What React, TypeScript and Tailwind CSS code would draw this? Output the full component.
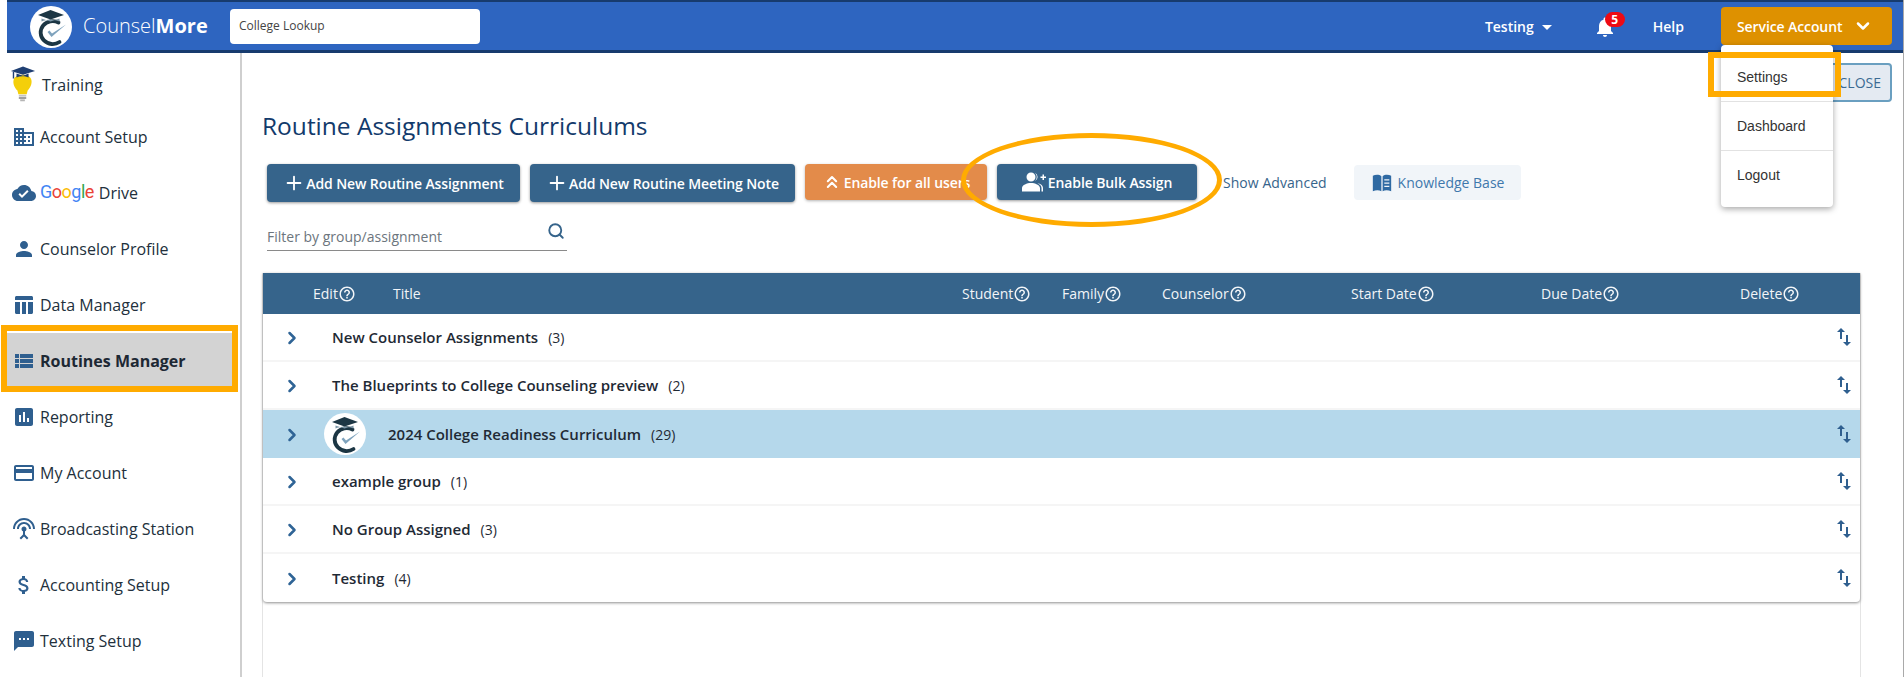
import React from 'react';
import { ChevronDown, ChevronRight, ChevronsUp, Plus, Search } from 'lucide-react';

const paths: Record<string, string> = {
  business: 'M12 7V3H2v18h20V7H12zM6 19H4v-2h2v2zm0-4H4v-2h2v2zm0-4H4V9h2v2zm0-4H4V5h2v2zm4 12H8v-2h2v2zm0-4H8v-2h2v2zm0-4H8V9h2v2zm0-4H8V5h2v2zm10 12h-8v-2h2v-2h-2v-2h2v-2h-2V9h8v10zm-2-8h-2v2h2v-2zm0 4h-2v2h2v-2z',
  cloud: 'M19.35 10.04C18.67 6.59 15.64 4 12 4 9.11 4 6.6 5.64 5.35 8.04 2.34 8.36 0 10.91 0 14c0 3.31 2.69 6 6 6h13c2.76 0 5-2.24 5-5 0-2.64-2.05-4.78-4.65-4.96zM10 17l-3.5-3.5 1.41-1.41L10 14.17 15.18 9l1.41 1.41L10 17z',
  person: 'M12 12c2.21 0 4-1.79 4-4s-1.79-4-4-4-4 1.79-4 4 1.79 4 4 4zm0 2c-2.67 0-8 1.34-8 4v2h16v-2c0-2.66-5.33-4-8-4z',
  table: 'M3 4.5c0-.8.7-1.5 1.5-1.5h15c.8 0 1.5.7 1.5 1.5V7H3zM3 9h5v12H4.5C3.700 21 3 20.300 3 19.500zM10 9h4v12h-4zM16 9h5v10.500c0 .8-.7 1.500-1.500 1.500H16z',
  list: 'M3 14h4v-4H3v4zm0 5h4v-4H3v4zM3 9h4V5H3v4zm5 5h13v-4H8v4zm0 5h13v-4H8v4zM8 5v4h13V5H8z',
  chart: 'M19 3H5c-1.100 0-2 .9-2 2v14c0 1.100.9 2 2 2h14c1.100 0 2-.9 2-2V5c0-1.100-.9-2-2-2zM9 17H7v-7h2v7zm4 0h-2V7h2v10zm4 0h-2v-4h2v4z',
  card: 'M20 4H4c-1.110 0-1.990.89-1.990 2L2 18c0 1.110.89 2 2 2h16c1.110 0 2-.89 2-2V6c0-1.110-.89-2-2-2zm0 14H4v-6h16v6zm0-10H4V6h16v2z',
  antenna: 'M12 5c-3.870 0-7 3.130-7 7h2c0-2.760 2.240-5 5-5s5 2.240 5 5h2c0-3.870-3.130-7-7-7zm1 9.290c.88-.39 1.500-1.260 1.500-2.290 0-1.380-1.120-2.500-2.500-2.500S9.500 10.620 9.500 12c0 1.020.62 1.900 1.500 2.290v3.300L7.590 21 9 22.410l3-3 3 3L16.410 21 13 17.590v-3.300zM12 1C5.930 1 1 5.930 1 12h2c0-4.970 4.030-9 9-9s9 4.030 9 9h2c0-6.070-4.930-11-11-11z',
  dollar: 'M11.800 10.900c-2.270-.59-3-1.200-3-2.150 0-1.090 1.010-1.850 2.700-1.850 1.780 0 2.440.85 2.500 2.100h2.210c-.07-1.720-1.120-3.300-3.210-3.810V3h-3v2.160c-1.940.42-3.500 1.680-3.500 3.610 0 2.310 1.910 3.460 4.700 4.130 2.500.6 3 1.480 3 2.410 0 .69-.49 1.790-2.700 1.790-2.060 0-2.870-.92-2.980-2.100h-2.200c.12 2.190 1.760 3.420 3.680 3.830V21h3v-2.150c1.950-.37 3.500-1.500 3.500-3.550 0-2.840-2.430-3.810-4.700-4.400z',
  sms: 'M20 2H4c-1.100 0-1.990.9-1.990 2L2 22l4-4h14c1.100 0 2-.9 2-2V4c0-1.100-.9-2-2-2zM9 11H7V9h2v2zm4 0h-2V9h2v2zm4 0h-2V9h2v2z',
  swap: 'M16 17.010V10h-2v7.010h-3L15 21l4-3.990h-3zM9 3L5 6.990h3V14h2V6.990h3L9 3z',
  help: 'M11 18h2v-2h-2v2zm1-16C6.480 2 2 6.480 2 12s4.480 10 10 10 10-4.480 10-10S17.520 2 12 2zm0 18c-4.410 0-8-3.590-8-8s3.590-8 8-8 8 3.590 8 8-3.590 8-8 8zm0-14c-2.210 0-4 1.790-4 4h2c0-1.100.9-2 2-2s2 .9 2 2c0 2-3 1.750-3 5h2c0-2.250 3-2.500 3-5 0-2.210-1.790-4-4-4z',
  bell: 'M12 22c1.100 0 2-.9 2-2h-4c0 1.100.89 2 2 2zm6-6v-5c0-3.070-1.640-5.640-4.500-6.320V4c0-.83-.67-1.500-1.500-1.500s-1.500.67-1.500 1.500v.68C7.630 5.360 6 7.920 6 11v5l-2 2v1h16v-1l-2-2z',
  users: 'M9 11.500a4.500 4.500 0 1 0 0-9 4.500 4.500 0 0 0 0 9zM0 21.500v-3.500c0-3 5-5 9-5s9 2 9 5v3.500zM13 2.800a4.700 4.700 0 0 1 0 8.400 6.500 6.500 0 0 0 0-8.400zM15.500 13.300c3 .4 5.500 2.200 5.500 4.700v3.500h-1.500V18c0-2-1.500-3.600-4-4.700zM18.500 6.500h2v-2h1.500v2h2V8h-2v2h-1.500V8h-2z',
  book: 'M2 4c3-1.500 7-1.500 9.300.5V21c-2.300-1.500-6.300-1.500-9.300 0zM12.700 4.500C15 2.500 19 2.500 22 4v17c-3-1.500-7-1.500-9.300 0zM14.500 8v1.300h5.500V8zm0 3.500v1.300h5.500v-1.300zm0 3.500v1.300h5.500V15z',
};

const Icon = ({ name, className }: { name: string; className: string }) => (
  <svg viewBox="0 0 24 24" fill="currentColor" fillRule="evenodd" className={className}>
    <path d={paths[name]} />
  </svg>
);

const Logo = ({ className }: { className: string }) => (
  <svg viewBox="0 0 42 42" className={className}>
    <circle cx="21" cy="21" r="21" fill="#fff" />
    <path d="M29.500 36a12 11.500 0 1 1-1-19.500" fill="none" stroke="#1c3644" strokeWidth="3.800" strokeLinecap="round" />
    <path d="M8 9 20.500 4 34 9l-13.500 4.500z" fill="#1c3644" />
    <path d="M11.500 12.500v3c5-2.500 13-2.500 18 0v-3l-9 3z" fill="#7d97a8" />
    <path d="M17.500 26l4 5L36 18.500 22 27.500l-2.500-3z" fill="#7fa3bd" />
  </svg>
);

const TrainingIcon = () => (
  <svg viewBox="0 0 28 42" className="w-[26px] h-[40px] shrink-0">
    <path d="M8 27c-6-6-7-17 5.500-17S25 21 19 27l-1 4H9z" fill="#f4cf0a" />
    <rect x="9.500" y="31.500" width="8" height="2" fill="#c4c4c4" />
    <rect x="9.500" y="34" width="8" height="2" fill="#9a9a9a" />
    <rect x="11" y="36.500" width="5" height="2" fill="#b5b5b5" />
    <path d="M1 6 14 1l13 5-13 4z" fill="#1f3f73" />
    <path d="M7 8.500v4.500c4-2 9-2 13 0V8.500L14 11z" fill="#1f3f73" />
    <rect x="3" y="7" width="1.500" height="7" fill="#1f3f73" />
  </svg>
);

const menu = [
  { icon: 'business', label: 'Account Setup' },
  { icon: 'cloud', label: 'Drive', google: true },
  { icon: 'person', label: 'Counselor Profile' },
  { icon: 'table', label: 'Data Manager' },
  { icon: 'list', label: 'Routines Manager', active: true },
  { icon: 'chart', label: 'Reporting' },
  { icon: 'card', label: 'My Account' },
  { icon: 'antenna', label: 'Broadcasting Station' },
  { icon: 'dollar', label: 'Accounting Setup' },
  { icon: 'sms', label: 'Texting Setup' },
];

const columns = ['Student', 'Family', 'Counselor', 'Start Date', 'Due Date', 'Delete'];

const groups = [
  { title: 'New Counselor Assignments', count: 3 },
  { title: 'The Blueprints to College Counseling preview', count: 2 },
  { title: '2024 College Readiness Curriculum', count: 29, highlighted: true },
  { title: 'example group', count: 1 },
  { title: 'No Group Assigned', count: 3 },
  { title: 'Testing', count: 4 },
];

const HeadCell = ({ label }: { label: string }) => (
  <span className="flex items-center">
    {label}
    <Icon name="help" className="w-[18px] h-[18px]" />
  </span>
);

const Sidebar = () => (
  <aside className="w-[242px] shrink-0 border-r-2 border-[#cfcfcf] pt-2 text-[16px] text-[#22303c]">
    <div className="h-12 flex items-center pl-[10px] gap-[6px]">
      <TrainingIcon />
      <span>Training</span>
    </div>
    {menu.map((item) =>
      item.active ? (
        <div key={item.label} className="h-[54px] mb-[2px] pt-[2px] ml-[7px] w-[225px] pl-[5px] bg-[#d3d3d3] flex items-center gap-1 font-bold text-[#1d2833]">
          <Icon name={item.icon} className="w-6 h-6 shrink-0 text-[#2f5f8f]" />
          <span>{item.label}</span>
        </div>
      ) : (
        <div key={item.label} className="h-14 pl-3 flex items-center gap-1">
          <Icon name={item.icon} className="w-6 h-6 shrink-0 text-[#2f5f8f]" />
          {item.google && (
            <span className="text-[18px] tracking-[-0.5px] mr-[1px] -mt-1 font-['Roboto',sans-serif]">
              <span className="text-[#4285f4]">G</span>
              <span className="text-[#ea4335]">o</span>
              <span className="text-[#fbbc05]">o</span>
              <span className="text-[#4285f4]">g</span>
              <span className="text-[#34a853]">l</span>
              <span className="text-[#ea4335]">e</span>
            </span>
          )}
          <span>{item.label}</span>
        </div>
      )
    )}
  </aside>
);

const App: React.FC = () => {
  return (
    <div className="relative h-[677px] w-[1904px] overflow-hidden bg-white font-['Open_Sans',sans-serif] border-r border-[#a9a9a9]">
      <header className="ml-[7px] h-[53px] bg-[#2e65c0] border-t-2 border-b-[3px] border-[#173b6e] flex items-center text-white">
        <Logo className="w-[42px] h-[42px] ml-[23px] mt-[1px]" />
        <span className="ml-[11px] w-[123px] shrink-0 text-[20px] font-light whitespace-nowrap">Counsel<b className="font-bold">More</b></span>
        <div className="ml-6 w-[250px] h-[35px] bg-white rounded flex items-center pl-[9px] text-[12px] text-[#444]">College Lookup</div>
        <div className="ml-auto flex items-center text-[14px] font-semibold">
          <span className="flex items-center gap-2">
            Testing
            <span className="border-x-[5px] border-x-transparent border-t-[5px] border-t-white mt-[3px]" />
          </span>
          <span className="relative ml-[41px] mr-[36px] mt-[1px]">
            <Icon name="bell" className="w-[24px] h-[24px]" />
            <span className="absolute -top-[3px] left-[12px] w-5 h-[15px] rounded-full bg-[#ee0a14] text-[12px] leading-[15px] font-bold text-center">5</span>
          </span>
          <span>Help</span>
          <div className="ml-[37px] mr-[11px] w-[171px] h-[38px] rounded bg-[#de9100] flex items-center pl-4 text-[14px] font-semibold tracking-[-0.1px]">
            Service Account
            <ChevronDown className="w-5 h-5 ml-[11px]" strokeWidth={3} />
          </div>
        </div>
      </header>

      <div className="flex h-[624px]">
        <Sidebar />
        <main className="flex-1 pl-[20px] pr-[42px] flex flex-col min-w-0">
          <div className="flex justify-end h-[10px] relative">
            <button className="absolute top-[10px] -right-[31px] w-[78px] h-[39px] pr-[9px] text-right border-2 border-[#6a9fc0] rounded bg-[#e4eaf2] text-[14px] text-[#3b6a93]">CLOSE</button>
          </div>
          <h1 className="mt-[46px] text-[24.500px] leading-[33px] text-[#123a6b]">Routine Assignments Curriculums</h1>

          <div className="mt-[22px] ml-[5px] flex items-start text-[14px] font-semibold text-white tracking-[-0.1px]">
            <button className="w-[253px] h-[38px] rounded bg-[#36648b] shadow-[0_1px_3px_rgba(0,0,0,0.4)] flex items-center justify-center gap-[1px]">
              <Plus className="w-[22px] h-[22px]" strokeWidth={2} />Add New Routine Assignment
            </button>
            <button className="ml-[10px] w-[265px] h-[38px] rounded bg-[#36648b] shadow-[0_1px_3px_rgba(0,0,0,0.4)] flex items-center justify-center gap-[1px]">
              <Plus className="w-[22px] h-[22px]" strokeWidth={2} />Add New Routine Meeting Note
            </button>
            <button className="ml-[10px] w-[182px] h-9 rounded bg-[#e38b4a] shadow-[0_1px_3px_rgba(0,0,0,0.3)] flex items-center justify-center gap-[2px]">
              <ChevronsUp className="w-5 h-5" strokeWidth={2.5} />Enable for all users
            </button>
            <button className="ml-[10px] w-[200px] h-9 rounded bg-[#36648b] shadow-[0_1px_3px_rgba(0,0,0,0.4)] flex items-center justify-center gap-[2px]">
              <Icon name="users" className="w-[24px] h-[24px]" />Enable Bulk Assign
            </button>
            <span className="ml-[26px] w-[105px] h-9 flex items-center font-normal text-[#36648b] tracking-[0.05px] whitespace-nowrap">Show Advanced</span>
            <span className="ml-[26px] w-[167px] h-[35px] mt-[1px] rounded bg-[#f1f5f9] flex items-center justify-center gap-[5px] font-normal text-[#3f78ac] tracking-normal">
              <Icon name="book" className="w-[22px] h-[22px] text-[#2f6aa3]" />Knowledge Base
            </span>
          </div>

          <div className="mt-[20px] ml-[5px] w-[300px] h-[29px] border-b border-[#8a8a8a] flex items-start justify-between text-[14px] text-[#6c757d]">
            <span className="pt-[4px]">Filter by group/assignment</span>
            <Search className="w-[18px] h-[18px] mr-[2px] text-[#36648b]" strokeWidth={2.5} />
          </div>

          <div className="mt-[22px] flex-1 border-x border-[#e4e4e4]">
            <div className="rounded-b shadow-[0_1px_3px_rgba(0,0,0,0.45)]">
              <div className="h-[41px] bg-[#36648b] grid grid-cols-[50px_80px_569px_100px_100px_189px_190px_199px_1fr] items-center text-[14px] text-[#f2f5f8]">
                <span />
                <HeadCell label="Edit" />
                <span>Title</span>
                {columns.map((c) => (
                  <HeadCell key={c} label={c} />
                ))}
              </div>
              {groups.map((g, i) => (
                <div key={g.title} className={`h-12 flex items-center text-[15px] text-[#1f2a35] ${g.highlighted ? 'bg-[#b5d8eb]' : i < 5 ? 'border-b-2 border-[#f5f5f5]' : ''}`}>
                  <ChevronRight className="w-5 h-5 ml-[19px] mt-[2px] shrink-0 text-[#2f6496]" strokeWidth={3} />
                  {g.highlighted ? <Logo className="w-[42px] h-[42px] ml-[22px] mr-[22px]" /> : <span className="w-[30px]" />}
                  <span className="font-semibold">{g.title}</span>
                  <span className="ml-[10px] text-[14px]">({g.count})</span>
                  <Icon name="swap" className="ml-auto mr-[4px] w-6 h-6 text-[#2f5f8f]" />
                </div>
              ))}
            </div>
          </div>
        </main>
      </div>

      {/* account dropdown */}
      <div className="absolute left-[1721px] top-[45px] w-[112px] h-[162px] rounded bg-white shadow-[0_2px_6px_rgba(0,0,0,0.35)] font-['Liberation_Sans',sans-serif] text-[14px] text-[#333]">
        <div className="h-[57px] pl-4 pt-[22px] border-b border-[#e2e2e2]">Settings</div>
        <div className="h-[49px] pl-4 flex items-center border-b border-[#e2e2e2]">Dashboard</div>
        <div className="h-[49px] pl-4 flex items-center">Logout</div>
      </div>

      {/* orange annotations drawn over the screenshot */}
      <div className="absolute left-[1px] top-[325px] w-[237px] h-[67px] border-[6px] border-[#ffab00]" />
      <div className="absolute left-[1708px] top-[52px] w-[133px] h-[45px] border-[6px] border-[#ffab00]" />
      <div className="absolute left-[961px] top-[133px] w-[261px] h-[94px] rounded-[50%] border-[5px] border-[#ffab00]" />
    </div>
  );
};

export default App;
